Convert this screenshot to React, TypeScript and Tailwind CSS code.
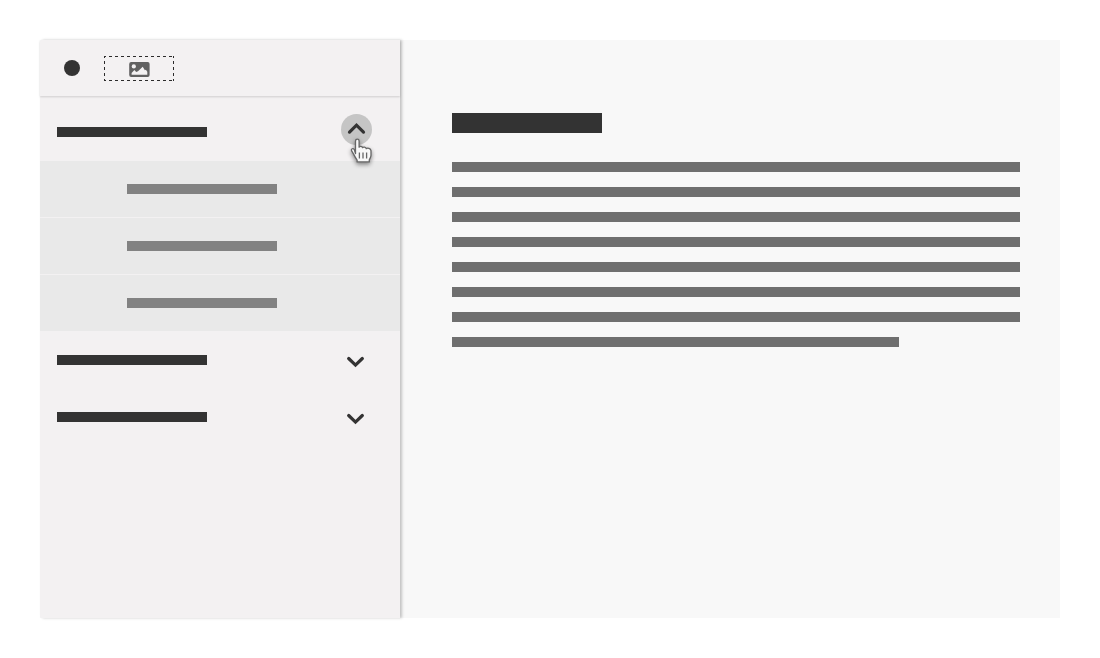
import { useState } from "react";

function Chevron({ up = false }: { up?: boolean }) {
  return (
    <svg width="20" height="16" viewBox="0 0 20 16" fill="none" stroke="#333333" strokeWidth="3.2" strokeLinecap="round" strokeLinejoin="miter" aria-hidden="true">
      <path d={up ? "M2.5 11.1 9.5 4.2l7 6.9" : "M1.7 6.5 8.5 13.1 15.3 6.5"} />
    </svg>
  );
}

function ImagePlaceholder() {
  return (
    <svg width="70" height="25" viewBox="0 0 70 25" fill="none" aria-hidden="true">
      <path d="M0 .5h70M0 24.5h70M.5 0v25M69.5 0v25" stroke="#2b2b2b" strokeDasharray="3 3" strokeDashoffset="1" shapeRendering="crispEdges" />
      <rect x="25.2" y="6" width="20.4" height="15" rx="2" fill="#616161" />
      <circle cx="29.8" cy="10.4" r="2.1" fill="#f3f1f2" />
      <path d="M27.6 18.7v-1.8l2.8-3 1.8 2 1.8-.6 4.7-4.6 2.2 3.6 1-.5 1.4 2v2.9z" fill="#f3f1f2" />
    </svg>
  );
}

function HandCursor() {
  return (
    <svg className="pointer-events-none absolute left-2 top-6 drop-shadow-[0_2px_2px_rgba(0,0,0,0.45)]" width="26" height="28" viewBox="0 0 26 28" aria-hidden="true">
      <path
        d="M6.5 15.6V3c0-2.4 3.6-2.4 3.6 0v6.2c.6-1.2 3-1 3.5.5.8-1 3.2-.7 3.6.9 1.3-.8 4.5-.3 4.8 2v4.6c0 1.9-1 3.2-1.7 4.7v2H8.1v-1.8c-1.2-1.6-2.7-4.4-3.5-6l-2.1-3.4c-.7-2 1.6-2.8 2.7-1.3z"
        fill="#f8f8f8"
        stroke="#666666"
        strokeWidth="1.3"
        strokeLinejoin="round"
      />
      <path d="M10.4 14.5v6M14 14.5v6M17.6 14.5v6" stroke="#666666" strokeWidth="1.3" />
    </svg>
  );
}

function Section({ label, open, onToggle }: { label: string; open: boolean; onToggle: () => void }) {
  return (
    <div className={open ? "flex h-16 items-center justify-between pl-[17px] pr-7" : "flex h-[57px] items-center justify-between pl-[17px] pr-7"}>
      <span className={open ? "mt-1.5 h-2.5 w-[150px] bg-[#333333]" : "h-2.5 w-[150px] bg-[#333333]"} />
      <button
        type="button"
        aria-label={label}
        aria-expanded={open}
        onClick={onToggle}
        className={open ? "relative flex size-[31px] items-center justify-center rounded-full bg-[#c5c5c5]" : "flex size-[31px] items-center justify-center rounded-full"}
      >
        <Chevron up={open} />
        {open && <HandCursor />}
      </button>
    </div>
  );
}

const lines = [1, 2, 3, 4, 5, 6, 7];

export default function App() {
  const [active, setActive] = useState(0);
  return (
    <div className="min-h-screen bg-white p-10">
      <div className="flex min-h-[578px] bg-[#f8f8f8]">
        <aside className="w-[360px] shrink-0 rounded-l-xs bg-[#f3f1f2] shadow-[2px_0_3px_rgba(0,0,0,0.22)]">
          <header className="flex h-14 items-center gap-6 pl-6 shadow-[0_1px_2px_rgba(0,0,0,0.15)]">
            <button type="button" aria-label="Menu" className="size-4 rounded-full bg-[#333333]" />
            <ImagePlaceholder />
          </header>
          <nav aria-label="Sections" className="pt-px">
            {[0, 1, 2].map((i) => (
              <div key={i}>
                <Section label={"Toggle section " + (i + 1)} open={active === i} onToggle={() => setActive(active === i ? -1 : i)} />
                {active === i && (
                  <ul className="flex flex-col gap-px">
                    {[1, 2, 3].map((n) => (
                      <li key={n}>
                        <a href="#content" aria-label={"Item " + n} className="flex h-14 items-center bg-[#e9e9e9] pl-[87px]">
                          <span className="h-2.5 w-[150px] bg-[#828282]" />
                        </a>
                      </li>
                    ))}
                  </ul>
                )}
              </div>
            ))}
          </nav>
        </aside>
        <main id="content" className="min-w-0 flex-1 pb-10 pl-[52px] pr-10 pt-[73px]">
          <div className="h-5 w-[150px] bg-[#333333]" />
          <div className="mt-[29px] flex flex-col gap-[15px]">
            {lines.map((n) => (
              <div key={n} className="h-2.5 bg-[#6f6f6f]" />
            ))}
            <div className="h-2.5 w-[447px] max-w-full bg-[#6f6f6f]" />
          </div>
        </main>
      </div>
    </div>
  );
}
